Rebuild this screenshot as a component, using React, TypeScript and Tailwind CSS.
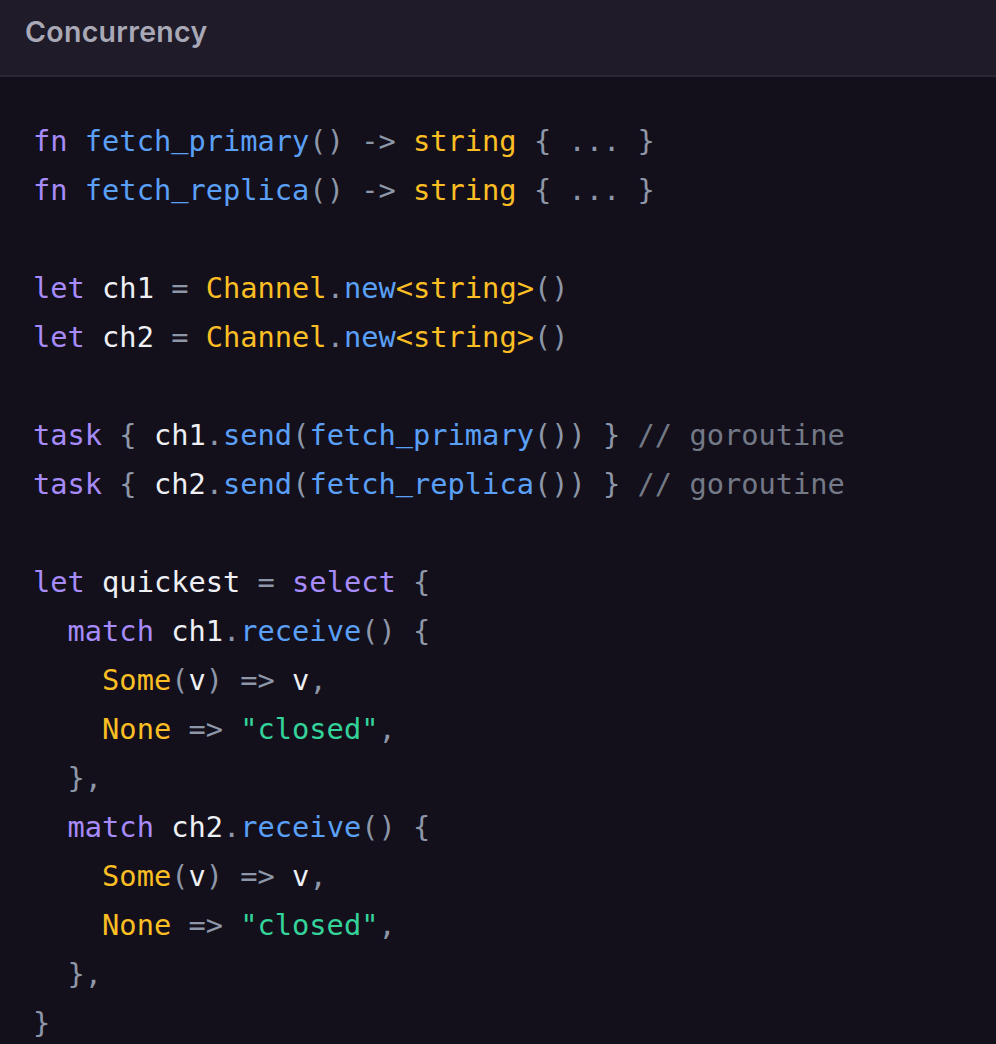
const K = "text-[#a78bfa]"; // keyword
const F = "text-[#5ba0f7]"; // function
const Y = "text-[#fbbf24]"; // type
const P = "text-[#8e97a8]"; // punctuation
const I = "text-[#eef0f5]"; // identifier
const S = "text-[#34d399]"; // string
const C = "text-[#737986]"; // comment

type Seg = [string, string];

const lines: Seg[][] = [
  [["fn", K], [" ", I], ["fetch_primary", F], ["()", P], [" -> ", P], ["string", Y], [" { ... }", P]],
  [["fn", K], [" ", I], ["fetch_replica", F], ["()", P], [" -> ", P], ["string", Y], [" { ... }", P]],
  [],
  [["let", K], [" ch1 ", I], ["= ", P], ["Channel", Y], [".", P], ["new", F], ["<string>", Y], ["()", P]],
  [["let", K], [" ch2 ", I], ["= ", P], ["Channel", Y], [".", P], ["new", F], ["<string>", Y], ["()", P]],
  [],
  [["task", K], [" { ", P], ["ch1", I], [".", P], ["send", F], ["(", P], ["fetch_primary", F], ["())", P], [" } ", P], ["// goroutine", C]],
  [["task", K], [" { ", P], ["ch2", I], [".", P], ["send", F], ["(", P], ["fetch_replica", F], ["())", P], [" } ", P], ["// goroutine", C]],
  [],
  [["let", K], [" quickest ", I], ["= ", P], ["select", K], [" {", P]],
  [["  match", K], [" ch1", I], [".", P], ["receive", F], ["() {", P]],
  [["    Some", Y], ["(", P], ["v", I], [") => ", P], ["v", I], [",", P]],
  [["    None", Y], [" => ", P], ['"closed"', S], [",", P]],
  [["  },", P]],
  [["  match", K], [" ch2", I], [".", P], ["receive", F], ["() {", P]],
  [["    Some", Y], ["(", P], ["v", I], [") => ", P], ["v", I], [",", P]],
  [["    None", Y], [" => ", P], ['"closed"', S], [",", P]],
  [["  },", P]],
  [["}", P]],
];

// underscores render faint in DejaVu at this size, so give them their own span
function Token({ text, cls }: { text: string; cls: string }) {
  const parts = text.split("_");
  return (
    <span className={cls}>
      {parts.map((p, i) => (
        <span key={i}>
          {i > 0 && (
            <span className="font-['Liberation_Mono',monospace] inline-block w-[17.28px]">_</span>
          )}
          {p}
        </span>
      ))}
    </span>
  );
}

export default function App() {
  return (
    <div className="min-h-screen w-[996px] h-[1044px] overflow-hidden bg-[#13101c]">
      <div className="h-[77px] bg-[#1f1b29] border-b-2 border-[#2b2736] flex items-start pl-[25px] pt-[11px]">
        <h2 className="text-[28.5px] font-semibold text-[#a9a8b6] tracking-[0.3px] font-['Inter','Noto_Sans',sans-serif]">
          Concurrency
        </h2>
      </div>
      <pre className="pl-[33px] pt-[40px] text-[28.7px] leading-[49px] font-['DejaVu_Sans_Mono',monospace] whitespace-pre">
        {lines.map((segs, i) => (
          <div key={i} className="h-[49px]">
            {segs.map(([t, cls], j) => (
              <Token key={j} text={t} cls={cls} />
            ))}
          </div>
        ))}
      </pre>
    </div>
  );
}
